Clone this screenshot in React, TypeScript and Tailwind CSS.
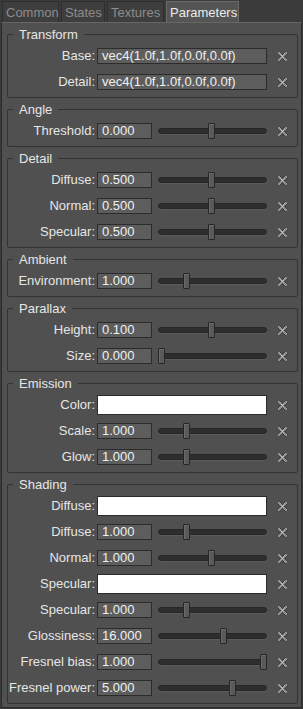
import React from 'react';

type Row =
  | { label: string; kind: 'text'; value: string }
  | { label: string; kind: 'num'; value: string; pos: number }
  | { label: string; kind: 'color' };

const groups: { title: string; rows: Row[] }[] = [
  {
    title: 'Transform',
    rows: [
      { label: 'Base:', kind: 'text', value: 'vec4(1.0f,1.0f,0.0f,0.0f)' },
      { label: 'Detail:', kind: 'text', value: 'vec4(1.0f,1.0f,0.0f,0.0f)' },
    ],
  },
  { title: 'Angle', rows: [{ label: 'Threshold:', kind: 'num', value: '0.000', pos: 0.49 }] },
  {
    title: 'Detail',
    rows: [
      { label: 'Diffuse:', kind: 'num', value: '0.500', pos: 0.49 },
      { label: 'Normal:', kind: 'num', value: '0.500', pos: 0.49 },
      { label: 'Specular:', kind: 'num', value: '0.500', pos: 0.49 },
    ],
  },
  { title: 'Ambient', rows: [{ label: 'Environment:', kind: 'num', value: '1.000', pos: 0.245 }] },
  {
    title: 'Parallax',
    rows: [
      { label: 'Height:', kind: 'num', value: '0.100', pos: 0.49 },
      { label: 'Size:', kind: 'num', value: '0.000', pos: 0 },
    ],
  },
  {
    title: 'Emission',
    rows: [
      { label: 'Color:', kind: 'color' },
      { label: 'Scale:', kind: 'num', value: '1.000', pos: 0.245 },
      { label: 'Glow:', kind: 'num', value: '1.000', pos: 0.245 },
    ],
  },
  {
    title: 'Shading',
    rows: [
      { label: 'Diffuse:', kind: 'color' },
      { label: 'Diffuse:', kind: 'num', value: '1.000', pos: 0.245 },
      { label: 'Normal:', kind: 'num', value: '1.000', pos: 0.49 },
      { label: 'Specular:', kind: 'color' },
      { label: 'Specular:', kind: 'num', value: '1.000', pos: 0.245 },
      { label: 'Glossiness:', kind: 'num', value: '16.000', pos: 0.61 },
      { label: 'Fresnel bias:', kind: 'num', value: '1.000', pos: 1 },
      { label: 'Fresnel power:', kind: 'num', value: '5.000', pos: 0.7 },
    ],
  },
];

const tabs = [
  { name: 'Common', w: 'w-[57px]' },
  { name: 'States', w: 'w-[44px]' },
  { name: 'Textures', w: 'w-[57px]' },
  { name: 'Parameters', w: 'w-[73px]', active: true },
];

function ResetIcon() {
  return (
    <svg width="11" height="11" viewBox="0 0 11 11">
      <path d="M1.5 1.5 L9.5 9.5 M9.5 1.5 L1.5 9.5" stroke="#3a3a3a" strokeWidth="3.2" />
      <path d="M1.5 1.5 L9.5 9.5 M9.5 1.5 L1.5 9.5" stroke="#d4d4d4" strokeWidth="1.7" strokeDasharray="1.2 0.5" />
    </svg>
  );
}

function Slider({ pos }: { pos: number }) {
  return (
    <div className="relative ml-[6px] h-[16px] w-[109px] flex items-center">
      <div className="h-[6px] w-full rounded-full bg-[#2e2e2e] border border-[#272727] shadow-[0_1px_0_#5c5c5c]" />
      <div
        className="absolute top-0 h-[16px] w-[7px] rounded-[1px] bg-[#5a5a5a] border border-[#262626] shadow-[inset_1px_1px_0_#6a6a6a]"
        style={{ left: `${pos * 102}px` }}
      />
    </div>
  );
}

function FieldRow({ row }: { row: Row }) {
  return (
    <div className="flex items-center h-[20px]">
      <div className="w-[87px] text-right text-[#e6e6e6] whitespace-nowrap">{row.label}</div>
      <div className="ml-[2px] flex items-center w-[170px]">
        {row.kind === 'text' && (
          <div className="w-[170px] h-[16px] leading-[14px] pl-[4px] bg-[#5d5d5d] border border-[#2c2c2c] text-[#f0f0f0] whitespace-nowrap">
            {row.value}
          </div>
        )}
        {row.kind === 'color' && <div className="w-[170px] h-[20px] bg-white border border-[#2c2c2c]" />}
        {row.kind === 'num' && (
          <>
            <div className="w-[55px] h-[16px] leading-[14px] pl-[4px] bg-[#5d5d5d] border border-[#2c2c2c] text-[#f0f0f0]">
              {row.value}
            </div>
            <Slider pos={row.pos} />
          </>
        )}
      </div>
      <div className="w-[30px] flex items-center justify-center">
        <ResetIcon />
      </div>
    </div>
  );
}

export default function App() {
  return (
    <div className="h-screen overflow-hidden flex flex-col bg-[#3a3a3a] text-[13px] font-['Liberation_Sans',Arial,sans-serif]">
      {/* Tabs */}
      <div className="h-[22px] flex gap-[2px] pl-[2px] pt-[1px] bg-[#3b3b3b]">
        {tabs.map((t) => (
          <div
            key={t.name}
            className={`${t.w} h-[21px] pl-[3px] leading-[21px] whitespace-nowrap border-x border-t ${
              t.active
                ? 'bg-[#555555] text-[#ececec] border-[#6a6a6a]'
                : 'bg-[#3e3e3e] text-[#8c8c8c] border-[#2e2e2e]'
            }`}
          >
            {t.name}
          </div>
        ))}
      </div>

      {/* Panel */}
      <div className="flex-1 ml-[1px] mr-[1px] mb-[1px] bg-[#505050] border border-[#2c2c2c] border-t-[#666666] pt-[4px] pl-[5px] pr-[3px]">
        {groups.map((g, i) => (
          <fieldset
            key={g.title}
            className={`w-[291px] border border-[#333333] rounded-[2px] pb-[5px] ${i > 0 ? 'mt-[4px]' : ''}`}
          >
            <legend className="ml-[5px] px-[6px] leading-[15px] text-[#e6e6e6]">{g.title}</legend>
            <div className="flex flex-col gap-[6px] pt-[4px]">
              {g.rows.map((r, j) => (
                <FieldRow key={j} row={r} />
              ))}
            </div>
          </fieldset>
        ))}
      </div>
    </div>
  );
}
